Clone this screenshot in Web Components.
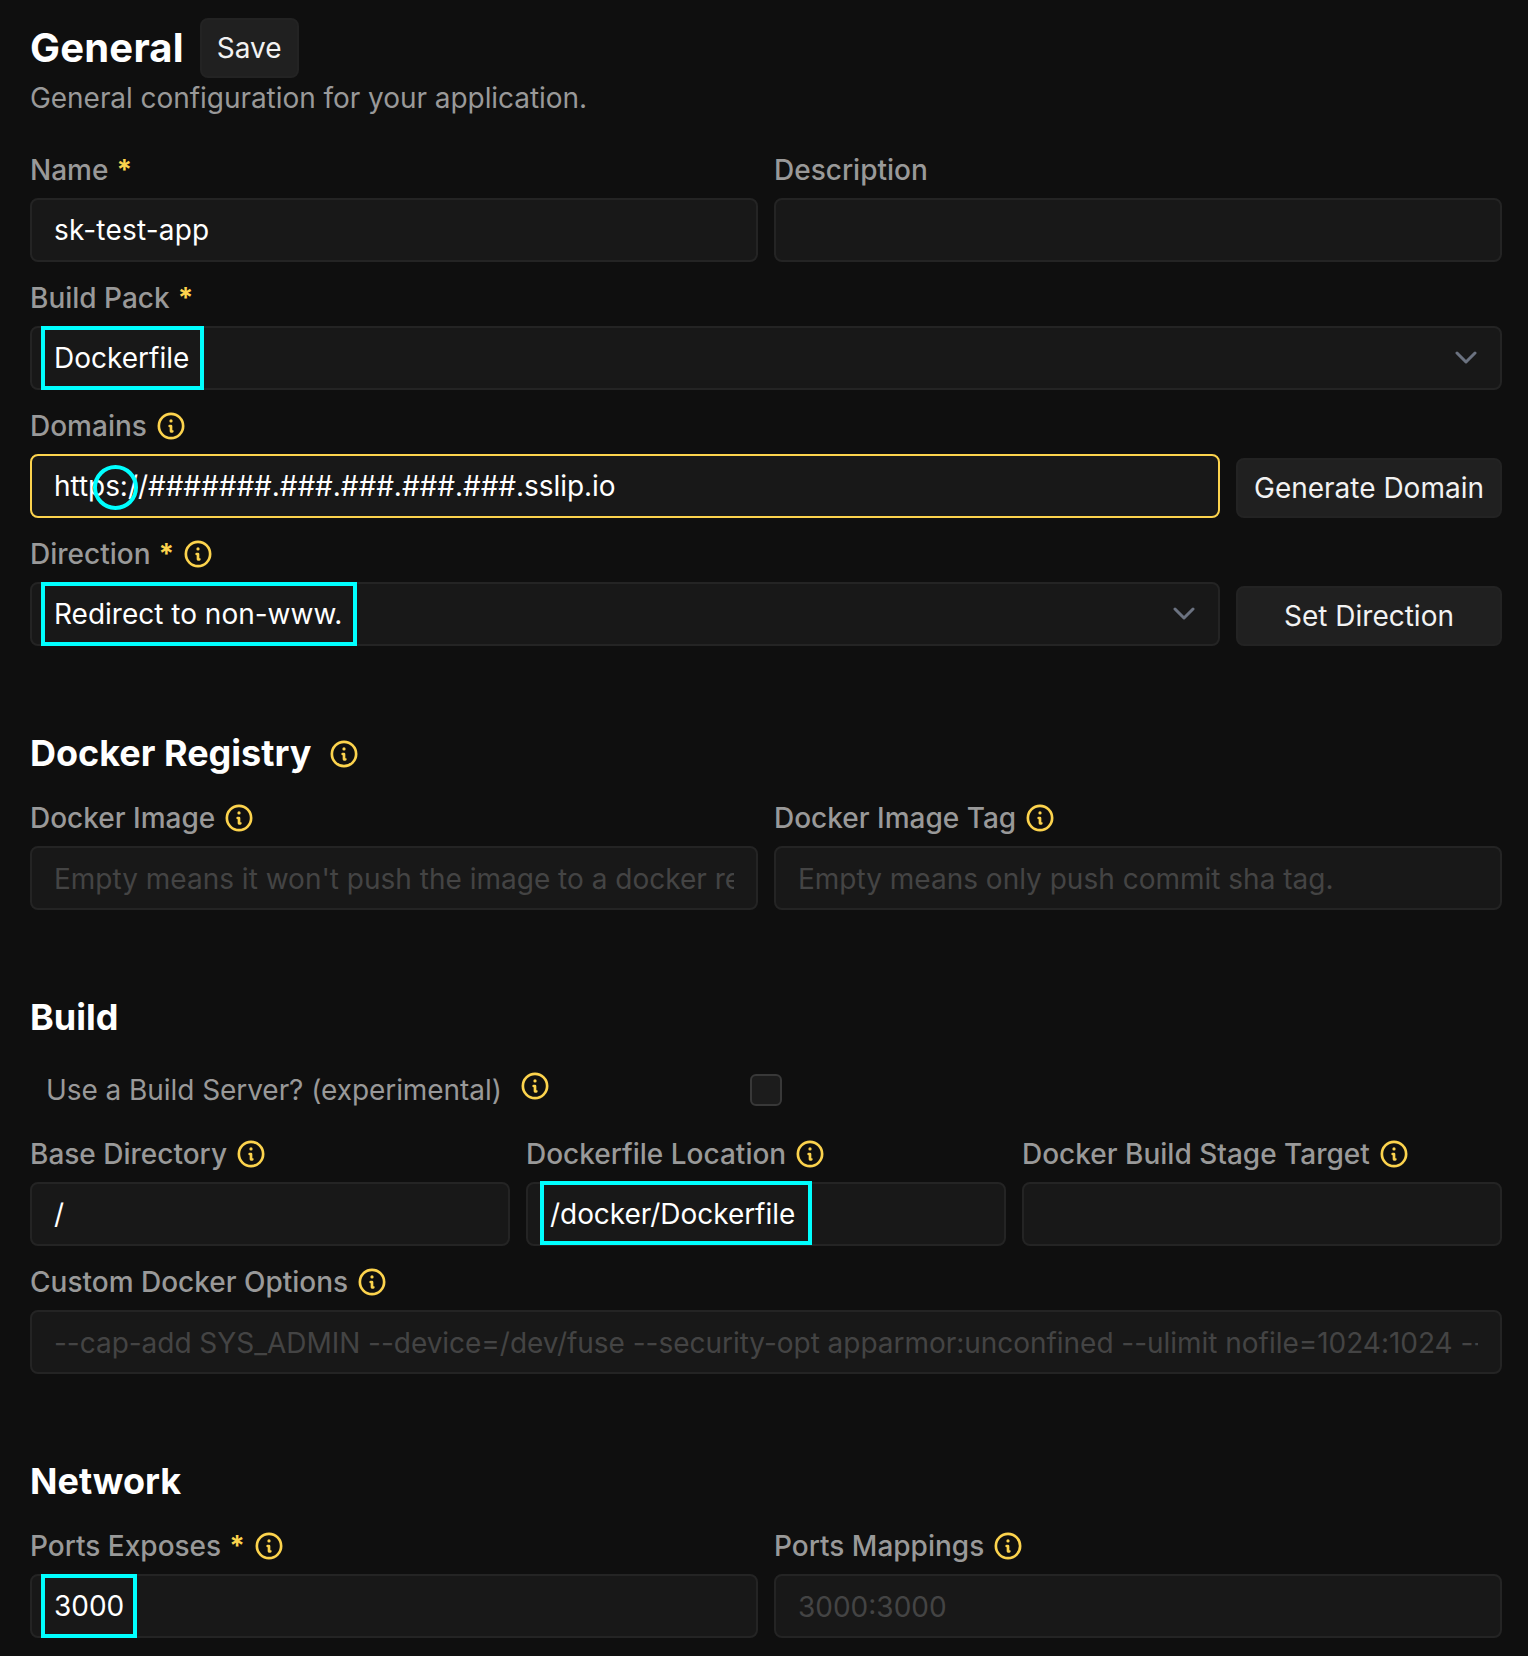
<!DOCTYPE html>
<html><head><meta charset="utf-8">
<style>
html,body{margin:0;background:#0f0f0f}
body{font-family:Inter,"Liberation Sans",sans-serif;font-size:28px;line-height:40px;color:#fff;font-optical-sizing:none}
</style></head><body>
<script>
const ICON=`<svg viewBox="0 0 24 24" width="32" height="32" fill="none" stroke="#fcd34d" stroke-width="2" stroke-linecap="round" stroke-linejoin="round"><circle cx="12" cy="12" r="9.1"/><path d="M12 8.2h.01" stroke-width="2.4"/><path d="M11 12h1v4h1"/></svg>`;
const def=(n,css,html,extra={})=>{customElements.define(n,class extends HTMLElement{
  constructor(){super();this.attachShadow({mode:'open'});}
  connectedCallback(){const r=this.shadowRoot;r.innerHTML=`<style>${css}</style>${typeof html==='function'?html(this):html}`;if(extra.init)extra.init(this,r);}
});};
def('info-icon',':host{display:inline-flex;width:32px;height:32px;flex:none}',ICON);
def('app-page',':host{display:block;padding:18px 26px 0 30px;box-sizing:border-box;width:1528px;height:1656px;overflow:hidden}','<slot></slot>');
def('title-row',':host{display:flex;align-items:center;gap:16px;height:60px}','<slot></slot>');
def('app-title',':host{display:block;font-size:40px;line-height:60px;font-weight:700;letter-spacing:.2px}','<slot></slot>');
def('app-button',`:host{display:flex;align-items:center;justify-content:center;background:#202020;border:2px solid #232323;border-radius:8px;height:60px;box-sizing:border-box;color:#f2f2f2;padding:0 15px;white-space:nowrap}`,'<slot></slot>');
def('app-sub',':host{display:block;color:#999;height:40px;margin-bottom:32px;letter-spacing:-.05px}','<slot></slot>');
def('section-head',`:host{display:flex;align-items:center;gap:17px;height:56px;box-sizing:border-box;padding-bottom:2px;margin-top:80px;margin-bottom:16px;font-size:36px;font-weight:700}`,'<slot></slot>');
def('field-label',`:host{display:flex;align-items:center;height:40px;gap:8px;color:#999;margin-bottom:8px;white-space:nowrap;font-weight:500}
 .req{color:#fcd34d;font-weight:700;}`,'<slot></slot><span class="req" id="r"></span><slot name="i"></slot>',{init(h,r){if(h.hasAttribute('req'))r.getElementById('r').textContent='*';else r.getElementById('r').remove();}});
def('field-row',`:host{display:grid;gap:16px;grid-template-columns:repeat(var(--c,2),1fr);margin-bottom:16px}`,'<slot></slot>');
def('form-field',':host{display:block;min-width:0}','<slot></slot>');
def('text-box',`:host{display:flex;align-items:center;height:64px;box-sizing:border-box;background:#181818;border:2px solid #242424;border-radius:8px;padding:0 22px;color:#fff;white-space:nowrap;position:relative;flex:1;min-width:0}
 :host([focus]){border-color:#fcd34d}
 :host([ph]){color:#444;padding-top:2px}
 :host([ph]) .t{overflow:hidden}
 .t{flex:1;min-width:0}
 svg{flex:none}`,
 h=>`<div class="t"><slot></slot></div>${h.hasAttribute('select')?'<svg width="24" height="14" viewBox="0 0 24 14" fill="none" stroke="#6b7280" stroke-width="3" stroke-linecap="round" stroke-linejoin="round"><path d="M3 2l9 9 9-9"/></svg>':''}`);
def('hi-box',`:host{display:inline-flex;align-items:center;box-sizing:border-box;border:4px solid #0ff;height:64px;margin:-2px 0;vertical-align:top;background:#181818}`,'<slot></slot>');
def('action-row',`:host{display:flex;gap:16px;align-items:flex-end;margin-bottom:16px}`,'<slot></slot>');
def('ring-mark',`:host{position:absolute;left:61px;top:9px;width:45px;height:45px;border:4px solid #0ff;border-radius:50%;box-sizing:border-box}`,'');
def('check-row',`:host{display:flex;align-items:center;height:56px;padding-left:16px;margin-bottom:16px;color:#999;white-space:nowrap;letter-spacing:-.06px}
 .i{margin-left:17px;margin-top:-8px;display:flex}
 .c{width:32px;height:32px;box-sizing:border-box;border:2px solid #383838;border-radius:6px;background:#1c1c1c;margin-left:auto}
 .g{display:flex;align-items:center;width:736px}`,'<div class="g"><slot></slot><span class="i"><slot name="i"></slot></span><div class="c"></div></div>');
</script>
<app-page>
  <title-row><app-title>General</app-title><app-button>Save</app-button></title-row>
  <app-sub>General configuration for your application.</app-sub>

  <field-row>
    <form-field><field-label req>Name</field-label><text-box style="letter-spacing:.2px">sk-test-app</text-box></form-field>
    <form-field><field-label>Description</field-label><text-box></text-box></form-field>
  </field-row>

  <field-label req>Build Pack</field-label>
  <action-row><text-box select><hi-box style="width:163px;margin-left:-13px;padding-left:9px">Dockerfile</hi-box></text-box></action-row>

  <field-label>Domains<info-icon slot="i"></info-icon></field-label>
  <action-row>
    <text-box focus style="letter-spacing:-.05px">https://#######.###.###.###.###.sslip.io<ring-mark></ring-mark></text-box>
    <app-button style="width:266px;padding:0">Generate Domain</app-button>
  </action-row>

  <field-label req>Direction<info-icon slot="i"></info-icon></field-label>
  <action-row style="margin-bottom:0">
    <text-box select><hi-box style="width:316px;margin-left:-13px;padding-left:9px">Redirect to non-www.</hi-box></text-box>
    <app-button style="width:266px;padding:0">Set Direction</app-button>
  </action-row>

  <section-head>Docker Registry<info-icon style="margin-top:2px"></info-icon></section-head>
  <field-row style="margin-bottom:0">
    <form-field><field-label>Docker Image<info-icon slot="i"></info-icon></field-label><text-box ph>Empty means it won't push the image to a docker registry.</text-box></form-field>
    <form-field><field-label>Docker Image Tag<info-icon slot="i"></info-icon></field-label><text-box ph>Empty means only push commit sha tag.</text-box></form-field>
  </field-row>

  <section-head>Build</section-head>
  <check-row>Use a Build Server? (experimental)<info-icon slot="i"></info-icon></check-row>
  <field-row style="--c:3">
    <form-field><field-label>Base Directory<info-icon slot="i"></info-icon></field-label><text-box>/</text-box></form-field>
    <form-field><field-label>Dockerfile Location<info-icon slot="i"></info-icon></field-label><text-box><hi-box style="width:272px;margin:-3px 0 -1px -10px;padding:2px 0 0 6px;letter-spacing:-.05px">/docker/Dockerfile</hi-box></text-box></form-field>
    <form-field><field-label>Docker Build Stage Target<info-icon slot="i"></info-icon></field-label><text-box></text-box></form-field>
  </field-row>
  <field-label>Custom Docker Options<info-icon slot="i"></info-icon></field-label>
  <text-box ph style="letter-spacing:-.03px">--cap-add SYS_ADMIN --device=/dev/fuse --security-opt apparmor:unconfined --ulimit nofile=1024:1024 --tmpfs /run:rw,noexec,nosuid,size=65536k</text-box>

  <section-head>Network</section-head>
  <field-row>
    <form-field><field-label req>Ports Exposes<info-icon slot="i"></info-icon></field-label><text-box><hi-box style="width:96px;margin-left:-13px;padding-left:9px">3000</hi-box></text-box></form-field>
    <form-field><field-label>Ports Mappings<info-icon slot="i"></info-icon></field-label><text-box ph>3000:3000</text-box></form-field>
  </field-row>
</app-page>
</body></html>
